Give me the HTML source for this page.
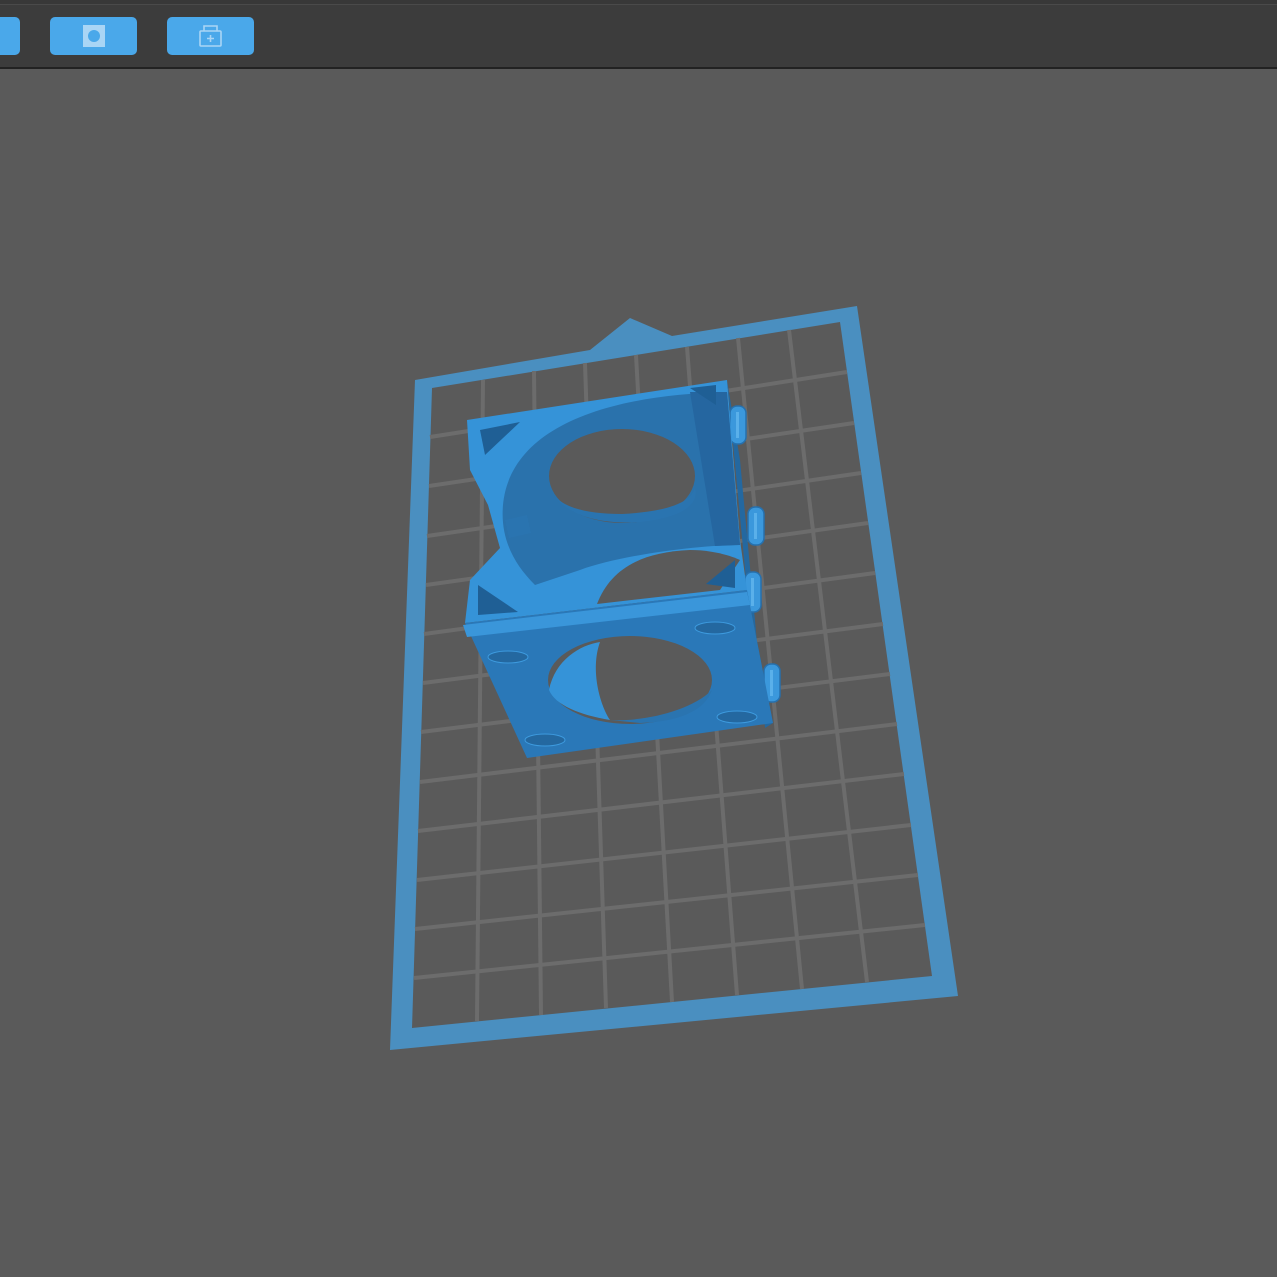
<!DOCTYPE html>
<html><head><meta charset="utf-8"><style>
html,body{margin:0;padding:0;background:#5a5a5a;width:1277px;height:1277px;overflow:hidden}
</style></head><body>
<svg width="1277" height="1277" viewBox="0 0 1277 1277" xmlns="http://www.w3.org/2000/svg">
<rect width="1277" height="1277" fill="#5a5a5a"/>
<rect x="0" y="0" width="1277" height="68" fill="#3c3c3c"/>
<rect x="0" y="0" width="1277" height="4" fill="#383838"/>
<rect x="0" y="4" width="1277" height="1" fill="#4a4a4a"/>
<rect x="0" y="67" width="1277" height="2" fill="#222"/>
<rect x="-20" y="17" width="40" height="38" rx="5" fill="#4aa8ea"/>
<rect x="50" y="17" width="87" height="38" rx="5" fill="#4aa8ea"/>
<rect x="83" y="25" width="22" height="22" fill="#a9d5f5"/>
<circle cx="94" cy="36" r="6" fill="#4aa8ea"/>
<rect x="167" y="17" width="87" height="38" rx="5" fill="#4aa8ea"/>
<g fill="none" stroke="#a9d5f5" stroke-width="1.6">
<rect x="200" y="31" width="21" height="15" rx="1"/>
<path d="M204 31v-5h13v5"/>
<path d="M210.5 35v7M207 38.5h7"/>
</g>
<polygon points="415,380 590,350 630,318 672,336 857,306 958,996 390,1050" fill="#4a8fc0"/>
<polygon points="432,388 840,322 932,976 412,1028" fill="#5a5a5a"/>
<g stroke="#6c6c6c" stroke-width="4">
<line x1="483" y1="380" x2="477" y2="1021"/>
<line x1="534" y1="371" x2="541" y2="1015"/>
<line x1="585" y1="363" x2="606" y2="1008"/>
<line x1="636" y1="355" x2="672" y2="1002"/>
<line x1="687" y1="347" x2="737" y2="995"/>
<line x1="738" y1="338" x2="802" y2="989"/>
<line x1="789" y1="330" x2="867" y2="982"/>
<line x1="430" y1="437" x2="847" y2="372"/>
<line x1="429" y1="486" x2="854" y2="423"/>
<line x1="427" y1="536" x2="861" y2="473"/>
<line x1="426" y1="585" x2="868" y2="523"/>
<line x1="424" y1="634" x2="875" y2="573"/>
<line x1="423" y1="683" x2="883" y2="624"/>
<line x1="421" y1="732" x2="890" y2="674"/>
<line x1="420" y1="782" x2="897" y2="724"/>
<line x1="418" y1="831" x2="904" y2="774"/>
<line x1="417" y1="880" x2="911" y2="825"/>
<line x1="415" y1="929" x2="918" y2="875"/>
<line x1="414" y1="978" x2="925" y2="925"/>
</g>
<polygon points="727,380 747,590 773,723 765,728 740,460" fill="#2468a0"/>
<g fill="#3b98dc" stroke="#2670ad" stroke-width="1.5">
<rect x="730" y="406" width="16" height="38" rx="7"/>
<rect x="748" y="507" width="16" height="38" rx="7"/>
<rect x="745" y="572" width="16" height="40" rx="7"/>
<rect x="764" y="664" width="16" height="38" rx="7"/>
</g>
<g fill="#5ab0ea"><rect x="736" y="412" width="3" height="26"/><rect x="754" y="513" width="3" height="26"/><rect x="751" y="578" width="3" height="28"/><rect x="770" y="670" width="3" height="26"/></g>
<polygon points="467,420 727,380 740,540 747,590 465,623 470,580 500,548 488,505 470,470" fill="#3593d8"/>
<path d="M503,505 C510,430 600,395 727,392 L740,545 C700,545 620,555 580,570 L535,585 C515,565 500,540 503,505 Z" fill="#2a72ac"/>
<path d="M690,392 L727,392 L740,545 L715,546 Z" fill="#2566a0"/>
<ellipse cx="622" cy="476" rx="73" ry="47" fill="#5a5a5a"/>
<path d="M549,486 C560,515 600,525 640,522 C680,518 700,505 695,488 C690,505 660,512 622,514 C580,514 555,505 549,486Z" fill="#2a74b0"/>
<path d="M597,604 C610,570 640,552 690,550 C720,550 740,560 740,560 L720,590 Z" fill="#5a5a5a"/>
<g fill="#1f5f95">
<polygon points="480,430 520,422 485,455"/>
<polygon points="690,388 716,385 716,405"/>
<polygon points="478,585 478,615 518,612"/>
<polygon points="706,584 735,560 735,588"/>
</g>
<path d="M505,520 l22,-5 l4,18 l-22,5z" fill="#2a74b0"/>
<polygon points="465,623 747,590 773,723 527,758" fill="#2a78b8"/>
<polygon points="463,625 747,592 750,605 467,637" fill="#3a96da"/>
<ellipse cx="630" cy="680" rx="82" ry="44" fill="#5a5a5a"/>
<path d="M549,690 C555,660 580,645 600,642 C590,670 600,705 610,720 C580,715 555,705 549,690Z" fill="#3593d8"/>
<path d="M610,720 C640,722 690,712 712,690 C705,710 680,722 640,723 Z" fill="#2a74b0"/>
<g fill="#2468a0" stroke="#3d9ade" stroke-width="1">
<ellipse cx="508" cy="657" rx="20" ry="6"/>
<ellipse cx="715" cy="628" rx="20" ry="6"/>
<ellipse cx="545" cy="740" rx="20" ry="6"/>
<ellipse cx="737" cy="717" rx="20" ry="6"/>
</g>
</svg>
</body></html>
